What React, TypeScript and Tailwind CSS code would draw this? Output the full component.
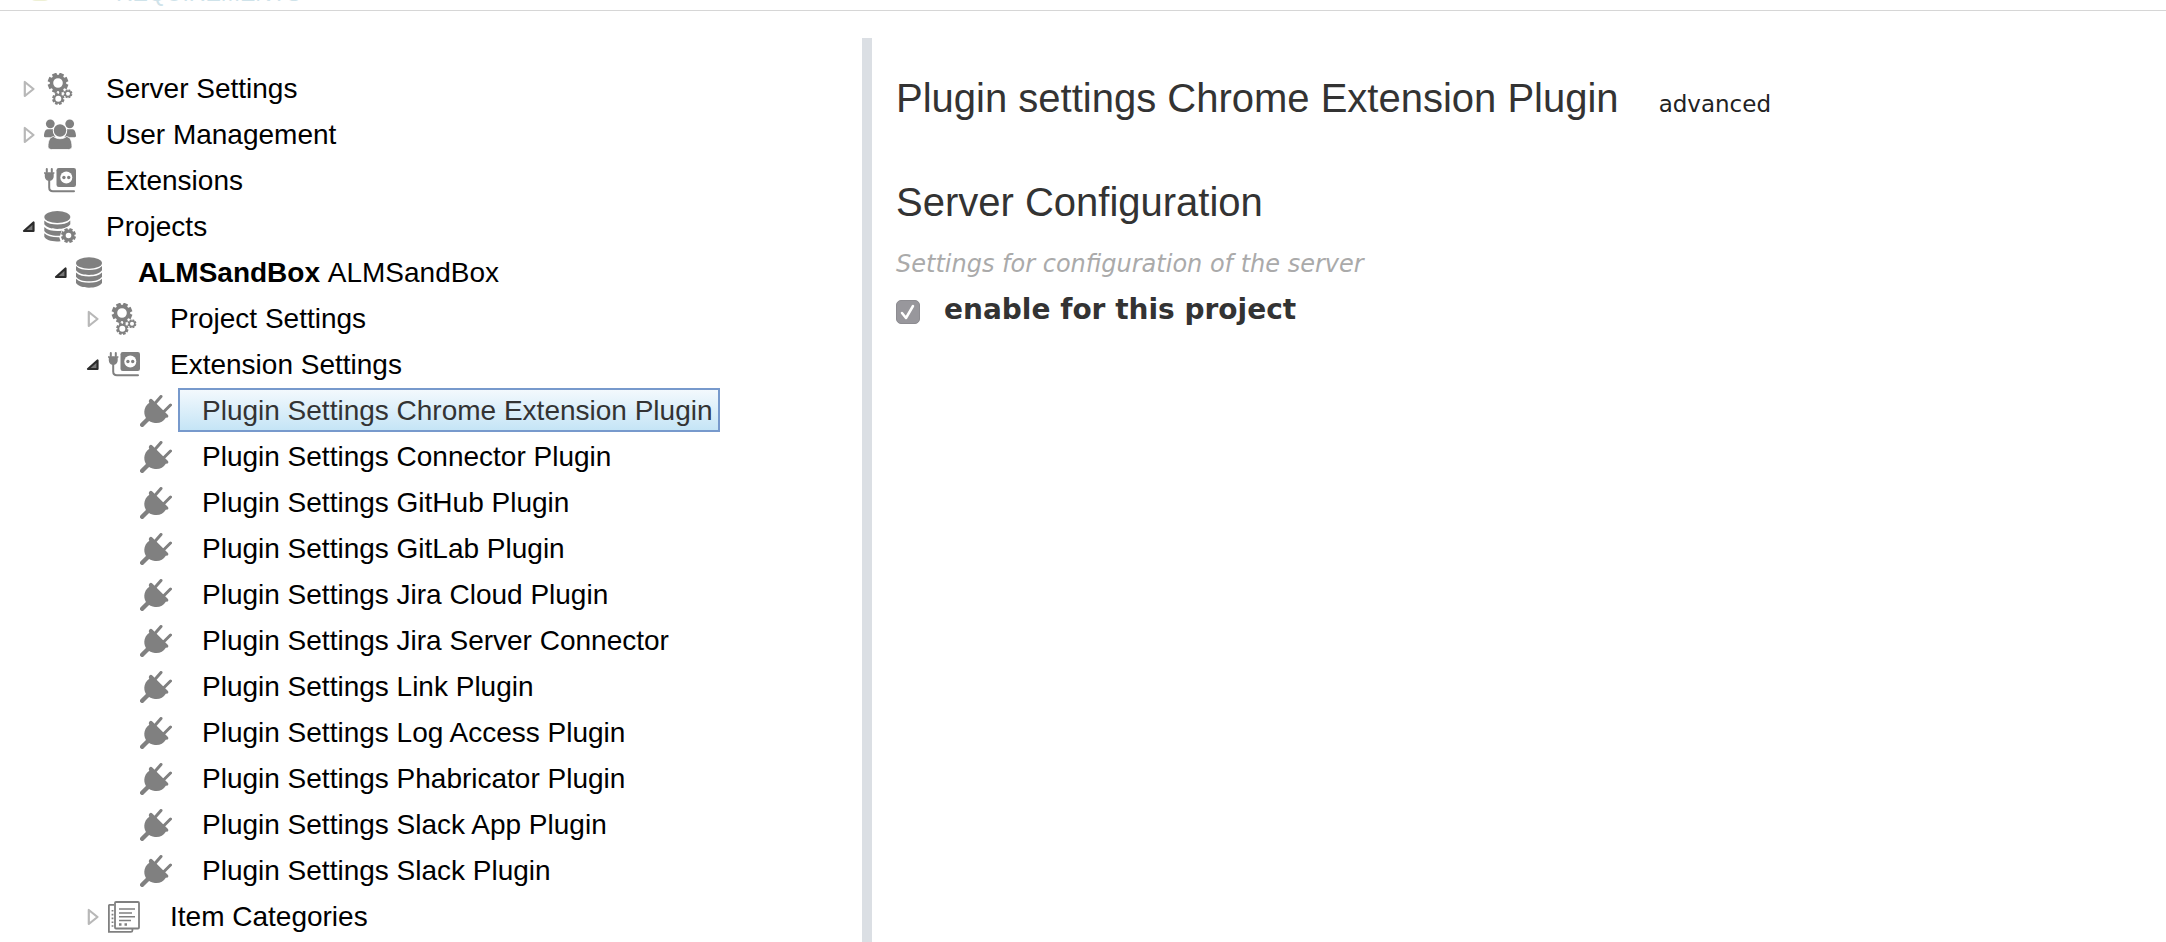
import React, { useState } from "react";

type IconName = "gears" | "users" | "extension" | "projects" | "database" | "plug" | "documents";

type Node = {
  level: number;
  icon: IconName;
  label: string;
  strong?: string;
  state?: "open" | "closed";
};

const nodes: Node[] = [
  { level: 0, icon: "gears", label: "Server Settings", state: "closed" },
  { level: 0, icon: "users", label: "User Management", state: "closed" },
  { level: 0, icon: "extension", label: "Extensions" },
  { level: 0, icon: "projects", label: "Projects", state: "open" },
  { level: 1, icon: "database", label: "ALMSandBox", strong: "ALMSandBox", state: "open" },
  { level: 2, icon: "gears", label: "Project Settings", state: "closed" },
  { level: 2, icon: "extension", label: "Extension Settings", state: "open" },
  { level: 3, icon: "plug", label: "Plugin Settings Chrome Extension Plugin" },
  { level: 3, icon: "plug", label: "Plugin Settings Connector Plugin" },
  { level: 3, icon: "plug", label: "Plugin Settings GitHub Plugin" },
  { level: 3, icon: "plug", label: "Plugin Settings GitLab Plugin" },
  { level: 3, icon: "plug", label: "Plugin Settings Jira Cloud Plugin" },
  { level: 3, icon: "plug", label: "Plugin Settings Jira Server Connector" },
  { level: 3, icon: "plug", label: "Plugin Settings Link Plugin" },
  { level: 3, icon: "plug", label: "Plugin Settings Log Access Plugin" },
  { level: 3, icon: "plug", label: "Plugin Settings Phabricator Plugin" },
  { level: 3, icon: "plug", label: "Plugin Settings Slack App Plugin" },
  { level: 3, icon: "plug", label: "Plugin Settings Slack Plugin" },
  { level: 2, icon: "documents", label: "Item Categories", state: "closed" },
];

const indent = ["pl-[12px]", "pl-[44px]", "pl-[76px]", "pl-[108px]"];

function Gear({ cx, cy, r, teeth, hole }: { cx: number; cy: number; r: number; teeth: number; hole: number }) {
  const tooth = r * 0.46;
  return (
    <g>
      <circle cx={cx} cy={cy} r={(r * 0.8 + hole) / 2} fill="none" stroke="currentColor" strokeWidth={r * 0.8 - hole} />
      {Array.from({ length: teeth }, (_, i) => (
        <rect
          key={i}
          x={cx - tooth / 2}
          y={cy - r}
          width={tooth}
          height={r * 0.3}
          fill="currentColor"
          transform={`rotate(${(i * 360) / teeth + 180 / teeth} ${cx} ${cy})`}
        />
      ))}
    </g>
  );
}

function Icon({ name }: { name: IconName }) {
  return (
    <svg viewBox="0 0 32 32" className="mt-[2px] size-8 shrink-0 text-[#808080]" fill="currentColor" aria-hidden="true">
      {name === "gears" && (
        <>
          <Gear cx={14} cy={10} r={10.3} teeth={8} hole={4.8} />
          <Gear cx={14.3} cy={25.7} r={6.2} teeth={8} hole={3} />
          <Gear cx={24} cy={20.7} r={4.4} teeth={8} hole={2} />
        </>
      )}
      {name === "users" && (
        <>
          <circle cx="6.3" cy="4.8" r="4.4" />
          <circle cx="25.7" cy="4.8" r="4.4" />
          <path d="M3.5 10.2h6.2c-1 3.6 .4 6.2 2 8H1.2C.2 18.2 0 17.5 0 16.5c.3-3 1.2-6.3 3.5-6.3zM28.5 10.2h-6.2c1 3.6-.4 6.2-2 8h10.5c1 0 1.2-.7 1.2-1.7-.3-3-1.2-6.3-3.5-6.3z" />
          <circle cx="16" cy="11.5" r="7.2" fill="white" />
          <circle cx="16" cy="11.5" r="6.2" />
          <path d="M9.5 17.5c2 1.5 4 2.2 6.5 2.2s4.5-.7 6.5-2.2c4 .5 5.5 5 5.5 10 0 2-1.5 3-3.5 3h-17c-2 0-3.5-1-3.5-3 0-5 1.5-9.5 5.5-10z" stroke="white" strokeWidth=".8" />
        </>
      )}
      {name === "extension" && (
        <g transform="translate(0 2)">
          <path d="M2.8 5V2M7.8 5V2" stroke="currentColor" strokeWidth="2" strokeLinecap="round" />
          <path d="M0 5.3h10.4v1.5H9.7V9.5c0 2-1.5 3.8-3.2 4.2H4C2.3 13.3.8 11.5.8 9.5V6.8H0z" />
          <path d="M5.2 13v7.5c0 2.6 1.2 3.7 3.7 3.7H30" fill="none" stroke="currentColor" strokeWidth="2" strokeLinecap="round" />
          <rect x="12.5" y="1" width="19.5" height="19" rx="2.2" />
          <circle cx="22.3" cy="10.5" r="6" fill="white" />
          <circle cx="19.9" cy="10.5" r="1.7" />
          <circle cx="24.7" cy="10.5" r="1.7" />
        </g>
      )}
      {name === "projects" && (
        <>
          <ellipse cx="13.3" cy="6" rx="13" ry="6" />
          <path d="M.3 9.5c3 3 8 4 13 4s10-1 13-4v3.8c-2 3-7 4.7-13 4.7S2.3 16.3.3 13.3zM.3 16c3 3 8 4 13 4 3 0 6-.4 8-1l-4 5.5c-7 .8-15-.7-17-4.5zM.3 22.3c3 3 8 4.2 15 4l1.2 4c-8 .8-14.4-1-16.2-4.5z" />
          <circle cx="24.5" cy="24.5" r="8.3" fill="white" />
          <Gear cx={24.5} cy={24.5} r={7.5} teeth={8} hole={2.8} />
        </>
      )}
      {name === "database" && (
        <>
          <ellipse cx="13" cy="6" rx="13" ry="5.8" />
          <path d="M0 9c3 3 8 4 13 4s10-1 13-4v4.3c-2 3-7 4.7-13 4.7S2 16.3 0 13.3zM0 15.5c3 3 8 4 13 4s10-1 13-4v4.2c-2 3-7 4.6-13 4.6S2 22.7 0 19.7zM0 21.8c3 3 8 4 13 4s10-1 13-4v4.2c-2 3-7 4.7-13 4.7S2 29 0 26z" />
        </>
      )}
      {name === "plug" && (
        <>
          <path d="M9.5 4.5c.8-1 1.9-1 2.8-.1l15.4 15.4c.9.9.9 2 0 2.7l-1.9.3c-2.3 4-6.3 5.7-10.8 5.2C8.5 27.5 4 22.5 4.3 16.5c.2-3.5 2-6.7 5-8.8-.7-1-.6-2.2.2-3.2z" />
          <path d="M2.2 29.8L9 23" stroke="currentColor" strokeWidth="4.4" strokeLinecap="round" />
          <path d="M14 9.5l7-8M23.5 17l7-7" stroke="currentColor" strokeWidth="3" strokeLinecap="round" />
        </>
      )}
      {name === "documents" && (
        <g fill="none" stroke="currentColor" strokeWidth="1.8">
          <path d="M6 3.9H1.4c-.3 0-.5.2-.5.5v26.5h22c1 0 1.5-.5 1.5-1.5V28" />
          <rect x="7" y="1" width="24" height="26.5" rx="1" />
          <path d="M11 8h16M11 12h13M11 15.7h16M11 19.5h12" strokeWidth="1.6" />
          <path d="M11 23.5h2.5M16.5 23.5H19" strokeWidth="2.5" />
          <path d="M4.5 9v18" strokeDasharray="1.6 2.2" />
        </g>
      )}
    </svg>
  );
}

function Arrow({ state }: { state?: "open" | "closed" }) {
  if (!state) return <span className="w-8 shrink-0" />;
  return (
    <button
      type="button"
      aria-label={state === "open" ? "Collapse" : "Expand"}
      className="flex w-8 shrink-0 justify-center pt-[2px] pl-[2px]"
    >
      <svg viewBox="0 0 14 18" className="h-[18px] w-[14px]" aria-hidden="true">
        {state === "open" ? (
          <path d="M2 13L11.5 4.5V13z" fill="#777777" stroke="#2b2b2b" strokeWidth="2.2" strokeLinejoin="round" />
        ) : (
          <path d="M2.8 2v14L11.5 9z" fill="white" stroke="#b8b8b8" strokeWidth="2.2" strokeLinejoin="round" />
        )}
      </svg>
    </button>
  );
}

export default function App() {
  const [selected, setSelected] = useState(7);
  const [enabled, setEnabled] = useState(true);

  return (
    <div className="flex h-screen flex-col overflow-hidden bg-white font-['Liberation_Sans',Arial,sans-serif]">
      <header className="flex h-[11px] shrink-0 items-start gap-[64px] overflow-hidden border-b border-[#d6d6d6] pl-[28px]">
        <span className="-mt-[23px] size-6 shrink-0 rounded-[8px] bg-[#eef0d4]" />
        <span className="-mt-[19px] text-[23px] leading-[24px] text-[#cfe3ea]">REQUIREMENTS</span>
      </header>
      <div className="flex min-h-0 grow pt-[27px]">
        <nav aria-label="Settings" className="w-[862px] shrink-0 overflow-hidden pt-[27px]">
          <ul>
            {nodes.map((node, i) => (
              <li key={i} className={`flex h-[46px] items-center ${indent[node.level]}`}>
                <Arrow state={node.state} />
                <Icon name={node.icon} />
                <button
                  type="button"
                  onClick={() => setSelected(i)}
                  className={`ml-[6px] h-[44px] border-2 pt-[2px] pr-[5px] pl-[22px] text-[28px] leading-[38px] whitespace-nowrap ${
                    selected === i
                      ? "border-[#7799cc] bg-linear-to-b from-[#f3f9fd] to-[#c5e5f6] text-[#333333]"
                      : "border-transparent text-black"
                  }`}
                >
                  {node.strong && <strong>{node.strong} </strong>}
                  {node.label}
                </button>
              </li>
            ))}
          </ul>
        </nav>
        <div className="w-[10px] shrink-0 bg-[#dbdfe4]" />
        <main className="grow pt-[36px] pl-[24px] font-['DejaVu_Sans',Verdana,sans-serif] text-[#333333]">
          <div className="flex items-baseline gap-[40px]">
            <h1 className="font-['Liberation_Sans',Arial,sans-serif] text-[40px] leading-[48px]">
              Plugin settings Chrome Extension Plugin
            </h1>
            <button type="button" className="text-[23px] leading-[32px] text-[#222222]">
              advanced
            </button>
          </div>
          <h2 className="mt-[56px] font-['Liberation_Sans',Arial,sans-serif] text-[40px] leading-[48px]">
            Server Configuration
          </h2>
          <p className="mt-[22px] text-[24px] leading-[32px] text-[#aaaaaa] italic">
            Settings for configuration of the server
          </p>
          <label className="mt-[12px] flex items-center gap-[24px] text-[28px] leading-[36px] font-bold">
            <span className="relative mt-[4px] flex size-6">
              <input
                type="checkbox"
                checked={enabled}
                onChange={(e) => setEnabled(e.target.checked)}
                className="size-6 appearance-none rounded-[5px] border border-[#8d8c91] bg-[#98979c]"
              />
              {enabled && (
                <svg viewBox="0 0 24 24" className="pointer-events-none absolute inset-0 size-6" aria-hidden="true">
                  <path d="M6 13l4 5 7-12" fill="none" stroke="white" strokeWidth="2.5" strokeLinecap="round" strokeLinejoin="round" />
                </svg>
              )}
            </span>
            enable for this project
          </label>
        </main>
      </div>
    </div>
  );
}
